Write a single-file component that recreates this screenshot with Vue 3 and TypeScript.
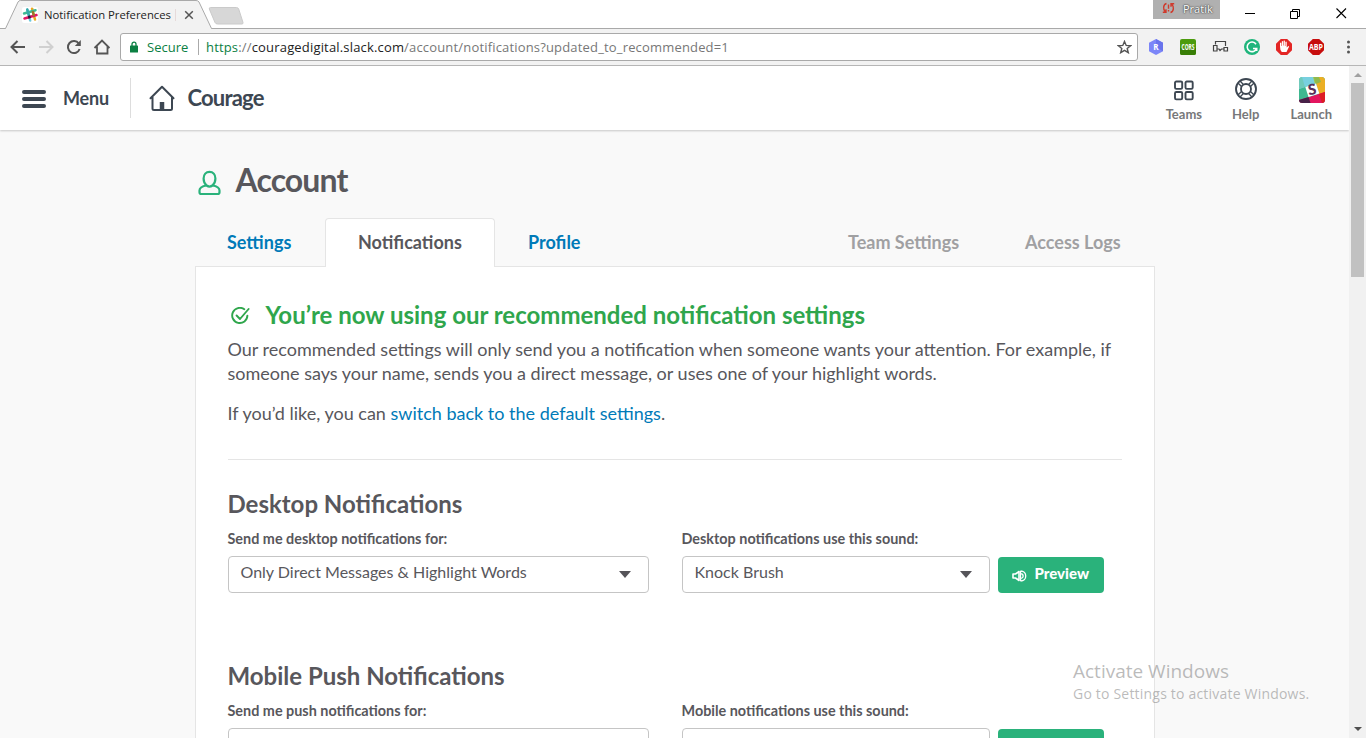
<script setup lang="ts">
interface Tab {
  label: string
  cls: string
}

interface Section {
  title: string
  scopeLabel: string
  scopeValue: string
  soundLabel: string
  soundValue: string
  action: string
}

const tabs: Tab[] = [
  { label: 'Settings', cls: 'tab-settings' },
  { label: 'Notifications', cls: 'tab-active' },
  { label: 'Profile', cls: 'tab-profile' },
  { label: 'Team Settings', cls: 'tab-muted tab-team' },
  { label: 'Access Logs', cls: 'tab-muted tab-logs' },
]

const sections: Section[] = [
  {
    title: 'Desktop Notifications',
    scopeLabel: 'Send me desktop notifications for:',
    scopeValue: 'Only Direct Messages & Highlight Words',
    soundLabel: 'Desktop notifications use this sound:',
    soundValue: 'Knock Brush',
    action: 'Preview',
  },
  {
    title: 'Mobile Push Notifications',
    scopeLabel: 'Send me push notifications for:',
    scopeValue: '',
    soundLabel: 'Mobile notifications use this sound:',
    soundValue: '',
    action: '',
  },
]
</script>

<template>
  <div class="window">
    <div class="titlebar">
      <svg class="tab-shapes" width="260" height="29" viewBox="0 0 260 29">
        <path d="M0 28.5H5.5L18 2Q18.800 .5 20.500 .5H196Q198 .5 199 2L211.500 28.500H260V29H0Z" fill="#f2f2f2" />
        <path d="M0 28.500H5.500L18 2Q18.800 .5 20.500 .5H196Q198 .5 199 2L211.500 28.500H260" fill="none" stroke="#a9a9a9" />
        <path d="M210.500 7.500H236.500Q238 7.500 238.700 9L243 22.500Q243.300 24 242 24H217.500Q215.800 24 215 22.500L209.300 9Q209 7.500 210.500 7.500Z" fill="#d7d7d7" stroke="#cacaca" />
      </svg>
      <div class="tab-content">
        <svg class="favicon" width="16" height="16" viewBox="0 0 16 16">
          <rect width="16" height="16" rx="2" fill="#fff" />
          <g fill="none" stroke-width="2.500" stroke-linecap="round">
            <path d="M5.200 2.500L8.200 13.500" stroke="#6ecadc" />
            <path d="M10 1.700L13 12.500" stroke="#e9a820" />
            <path d="M2 6.500L13.500 3.200" stroke="#3eb991" />
            <path d="M2.500 11.500L14.500 8" stroke="#e01563" />
            <path d="M5.300 2.600L6 5.300M6.200 6L7 8.700" stroke="#36a9a9" />
            <path d="M10.900 5L11.700 8" stroke="#99762b" />
          </g>
          <path d="M5.800 9L8.200 8.300L8.900 11L6.500 11.700Z" fill="#361238" />
        </svg>
        <span class="tab-title">Notification Preferences</span>
        <span class="tab-rule"></span>
        <svg class="tab-close" width="10" height="10" viewBox="0 0 10 10"><path d="M1.200 1.200L8.800 8.800M8.800 1.200L1.200 8.800" stroke="#555" stroke-width="1.500" /></svg>
      </div>
      <div class="win-controls">
        <div class="profile">
          <svg width="13" height="13" viewBox="0 0 13 13" fill="none" stroke="#cf3a2c" stroke-width="1.400">
            <path d="M4.500 1.500C1 2.500 .8 7.500 3.300 9.700M.8 10.300H4V7.300" />
            <path d="M8.500 10.500C12 9.500 12.200 4.500 9.700 2.300M12.200 1.700H9V4.700" />
            <path d="M6.500 2.500V6.700M6.500 8V9.500" />
          </svg>
          <span>Pratik</span>
        </div>
        <svg class="wc" width="106" height="14" viewBox="0 0 106 14" fill="none" stroke="#000">
          <path d="M0 7.500H10" />
          <path d="M45.500 5.500H52.500V12.500H45.500ZM47.500 5V3.500H54.500V10.500H53" />
          <path d="M91.500 2.500L101 12M101 2.500L91.500 12" stroke-width="1.100" />
        </svg>
      </div>
    </div>

    <div class="toolbar">
      <svg class="nav-icons" width="104" height="18" viewBox="0 0 104 18" fill="none" stroke="#555" stroke-width="2">
        <path d="M19 9H6.300M11.500 3L5.500 9L11.500 15" />
        <path d="M33 9H46M40.500 3L46.500 9L40.500 15" stroke="#d0d0d0" />
        <path d="M72.800 5.600A6 6 0 1 0 73.600 11" />
        <path d="M74.800 2V8H68.800Z" fill="#555" stroke="none" />
        <path d="M88.500 10L96 2.500L103.500 10M91 8.500V15.500H101.500V8.500" stroke-width="1.800" />
      </svg>
      <div class="omnibox">
        <svg width="8" height="12" viewBox="0 0 8 12"><path d="M2 5V3.200a2 2 0 0 1 4 0V5" fill="none" stroke="#0b8043" stroke-width="1.300" /><rect y="4.500" width="8" height="7" rx=".6" fill="#0b8043" /></svg>
        <span class="secure">Secure</span>
        <span class="sep"></span>
        <span class="url"><b>https</b><i>://</i>couragedigital.slack.com<i>/account/notifications?updated_to_recommended=1</i></span>
        <svg class="star" width="15" height="14" viewBox="0 0 15 14"><path d="M7.500 1.400L9.200 5.400L13.600 5.700L10.200 8.500L11.300 12.700L7.500 10.400L3.700 12.700L4.800 8.500L1.400 5.700L5.800 5.400Z" fill="none" stroke="#555" stroke-width="1.400" /></svg>
      </div>
      <svg class="extensions" width="208" height="18" viewBox="0 0 208 18">
        <path d="M8 1L15 4.800V13.200L8 17L1 13.200V4.800Z" fill="#7c86f8" />
        <path d="M8 1L15 4.800V13.200L8 9Z" fill="#6974ec" />
        <text x="8" y="12" class="ext-r">R</text>
        <rect x="32" y="1" width="16" height="16" rx="2" fill="#4c9b0e" />
        <path d="M32 10H48V15Q48 17 46 17H34Q32 17 32 15Z" fill="#387e06" />
        <text x="40" y="12" class="ext-cors" textLength="13" lengthAdjust="spacingAndGlyphs">CORS</text>
        <g fill="none" stroke="#444" stroke-width="1.200">
          <path d="M67.500 6.500V3.500H77.500V8M65.500 7.500H69V13H65.500ZM76 9.500H79.500V13H76ZM69 11H71L72 12.500L73.500 11H76" />
        </g>
        <circle cx="104" cy="9" r="8" fill="#1fb57c" />
        <path d="M108 6.200A4.800 4.800 0 1 0 108.500 10.500H105M108.700 10V13" fill="none" stroke="#fff" stroke-width="1.600" />
        <path d="M132.800 1H139.200L144 5.800V12.200L139.200 17H132.800L128 12.200V5.800Z" fill="#e32625" />
        <path d="M132 8.500V5Q132.700 4 133.300 5V8H133.800V3.500Q134.500 2.500 135.100 3.500V7.500H135.600V2.800Q136.300 2 136.900 2.800V8H137.400V4Q138.100 3.200 138.700 4V9.500L140.300 8Q141.600 8.300 140.800 9.300L138.500 14H133.800Q132 12.500 132 8.500Z" fill="#fff" />
        <path d="M164.800 1H171.200L176 5.800V12.200L171.200 17H164.800L160 12.200V5.800Z" fill="#c70d0d" />
        <text x="168" y="12" class="ext-abp" textLength="14" lengthAdjust="spacingAndGlyphs">ABP</text>
        <g fill="#555"><circle cx="200.500" cy="4" r="1.500" /><circle cx="200.500" cy="9" r="1.500" /><circle cx="200.500" cy="14" r="1.500" /></g>
      </svg>
    </div>

    <div class="viewport">
      <div class="page">
        <header class="site-header">
          <svg class="burger" width="24" height="18" viewBox="0 0 24 18" stroke="#3d4752" stroke-width="4" stroke-linecap="round"><path d="M2 2H22M2 9H22M2 16H22" /></svg>
          <span class="menu-label">Menu</span>
          <span class="divider"></span>
          <svg class="house" width="26" height="26" viewBox="0 0 26 26" fill="none" stroke="#3d4752" stroke-width="2" stroke-linecap="round" stroke-linejoin="round">
            <path d="M1.500 13.300L13 1.800L24.500 13.300M3.500 12V23.500Q3.500 25 5 25H21.500Q23 25 23 23.500V12" />
            <path d="M13 24V17" stroke-width="4.500" stroke-linecap="butt" />
          </svg>
          <span class="team-name">Courage</span>
          <nav class="quick">
            <div class="q-item q-teams">
              <svg width="22" height="26" viewBox="0 0 22 26" fill="none" stroke="#3d4752" stroke-width="1.900"><rect x="2" y="4.500" width="7.200" height="7.400" rx="1.300" /><rect x="12.500" y="4.500" width="7.200" height="7.400" rx="1.300" /><rect x="2" y="15" width="7.200" height="7.400" rx="1.300" /><rect x="12.500" y="15" width="7.200" height="7.400" rx="1.300" /></svg>
              <span>Teams</span>
            </div>
            <div class="q-item q-help">
              <svg width="24" height="26" viewBox="0 0 24 26" fill="none" stroke="#3d4752" stroke-width="1.900"><circle cx="12" cy="12" r="10" /><circle cx="12" cy="12" r="5" /><path d="M4 6L7.200 9.200M6 4L9.200 7.200M14.800 7.200L18 4M16.800 9.200L20 6M7.200 14.800L4 18M9.200 16.800L6 20M14.800 16.800L18 20M16.800 14.800L20 18" stroke-width="1.300" /></svg>
              <span>Help</span>
            </div>
            <div class="q-item q-launch">
              <svg width="26" height="26" viewBox="0 0 26 26">
                <defs><clipPath id="tile"><rect width="26" height="26" rx="3.500" /></clipPath></defs>
                <g clip-path="url(#tile)">
                  <rect width="26" height="26" fill="#3eb890" />
                  <path d="M0 0H15L17 6L6 10L0 12Z" fill="#78d0df" />
                  <path d="M0 0H3L6 10L0 12Z" fill="#70cabb" />
                  <path d="M14 0H20L21.500 5L16 7Z" fill="#a4c64b" />
                  <path d="M20 0H26V17L20 17L17 6Z" fill="#ebaf24" />
                  <path d="M15 0H20L22 5L16.500 7Z" fill="#90b94c" />
                  <path d="M10 20L26 15V26H0V23Z" fill="#e3155f" />
                  <path d="M20 17L26 15V26H23Z" fill="#dd1d23" />
                  <path d="M0 23L9.500 20L11.500 26H0Z" fill="#472148" />
                  <path d="M6.300 10L17 6.500L20.300 16.500L9.500 20Z" fill="#fff" />
                </g>
                <text x="13.300" y="17.800" class="launch-s" transform="rotate(-8 13 13)">S</text>
              </svg>
              <span>Launch</span>
            </div>
          </nav>
        </header>

        <main class="content">
          <h1>
            <svg width="24" height="26" viewBox="0 0 24 26" fill="none" stroke="#2ab27b" stroke-width="2.200" stroke-linejoin="round">
              <path d="M8.600 15.500C6.500 13.700 5.600 11 5.600 8.400C5.600 4.500 8 1.800 11.500 1.800S17.400 4.500 17.400 8.400C17.400 11 16.500 13.700 14.400 15.500C17.500 16 21.500 17.500 21.500 20.500V22.300Q21.500 24 19.800 24H3.200Q1.500 24 1.500 22.300V20.500C1.500 17.500 5.500 16 8.600 15.500Q11.500 17.600 14.400 15.500" />
            </svg>
            <span>Account</span>
          </h1>
          <div class="tabs">
            <a v-for="t in tabs" :key="t.label" class="tab" :class="t.cls"><span>{{ t.label }}</span></a>
          </div>
          <div class="card">
            <h2 class="success">
              <svg width="19" height="18" viewBox="0 0 19 18" fill="none" stroke="#2fa64c" stroke-width="1.900" stroke-linecap="round" stroke-linejoin="round"><path d="M13.300 2.300A7.600 7.600 0 1 0 16.400 8.600M5.600 8.500L9 12L17.600 2" /></svg>
              <span>You’re now using our recommended notification settings</span>
            </h2>
            <p class="body-text">Our recommended settings will only send you a notification when someone wants your attention. For example, if<br />someone says your name, sends you a direct message, or uses one of your highlight words.</p>
            <p class="body-text second">If you’d like, you can <a>switch back to the default settings</a>.</p>
            <hr />
            <section v-for="s in sections" :key="s.title" class="section">
              <h3>{{ s.title }}</h3>
              <div class="fields">
                <div class="field scope">
                  <label>{{ s.scopeLabel }}</label>
                  <div class="select"><span>{{ s.scopeValue }}</span><i class="caret"></i></div>
                </div>
                <div class="field sound">
                  <label>{{ s.soundLabel }}</label>
                  <div class="select"><span>{{ s.soundValue }}</span><i class="caret"></i></div>
                </div>
                <button class="preview">
                  <svg width="15" height="12" viewBox="0 0 15 12" fill="none" stroke="#fff" stroke-width="1.600" stroke-linejoin="round"><path d="M1 4H3.500L7 1.500V10.500L3.500 8H1Z" /><path d="M8.500 1C15.500 1 15.500 11 8.500 11M8.500 3.600C12 3.600 12 8.400 8.500 8.400M8.500 1V11" stroke-width="1.300" /></svg>
                  <span>{{ s.action }}</span>
                </button>
              </div>
            </section>
          </div>
        </main>
      </div>
      <div class="scrollbar">
        <i class="up"></i>
        <div class="thumb"></div>
        <i class="down"></i>
      </div>
    </div>

    <div class="watermark">
      <div class="wm-title">Activate Windows</div>
      <div class="wm-sub">Go to Settings to activate Windows.</div>
    </div>
  </div>
</template>

<style>
html, body { margin: 0; overflow: hidden; }
</style>

<style scoped>
* { box-sizing: border-box; }
.window { position: relative; width: 1366px; height: 738px; overflow: hidden; display: flex; flex-direction: column; background: #fff; font-family: Lato, sans-serif; color: #58575c; white-space: nowrap; }
i { font-style: normal; }
.titlebar { position: relative; height: 29px; flex: none; display: flex; justify-content: space-between; border-bottom: 1px solid #a9a9a9; font-family: "Open Sans", sans-serif; }
.tab-shapes { position: absolute; left: 0; top: 0; }
.tab-content { position: relative; display: flex; align-items: center; height: 29px; padding-left: 22px; }
.tab-title { width: 131px; margin-left: 6px; font-size: 11.300px; line-height: 20px; color: #222; }
.tab-rule { width: 1px; height: 12px; background: #e6dada; }
.tab-close { margin-left: 8px; }
.win-controls { display: flex; }
.profile { width: 67px; height: 19px; background: #b0b0b0; display: flex; align-items: center; padding-left: 9px; gap: 8px; font-size: 11px; color: #fff; text-shadow: 0 0 2px #333, 0 0 1px #333; }
.profile svg { margin-top: -2px; }
.profile span { line-height: 16px; margin-top: -1px; }
.wc { margin: 6px 15px 0 25px; }
.toolbar { height: 37px; flex: none; display: flex; align-items: center; background: #f2f2f2; border-bottom: 1px solid #b6b6b6; }
.nav-icons { margin-left: 6px; }
.omnibox { width: 1018px; height: 28px; margin-left: 10px; background: #fff; border: 1px solid #a9a9a9; border-radius: 3px; display: flex; align-items: center; padding-left: 9px; font-family: "Open Sans", sans-serif; font-size: 13px; }
.secure { margin-left: 9px; color: #0b8043; width: 42px; }
.sep { width: 1px; height: 16px; background: #aaa; margin: 0 7px 0 9px; }
.url { color: #222; letter-spacing: .17px; }
.url b { font-weight: 400; color: #0b8043; }
.url i { color: #777; }
.star { margin: 0 5px 0 auto; }
.extensions { margin-left: 10px; }
.ext-r { font: 700 8px "Open Sans"; fill: #fff; text-anchor: middle; }
.ext-cors { font: 700 8px "Open Sans"; fill: #fff; text-anchor: middle; }
.ext-abp { font: 700 8.500px "Open Sans"; fill: #fff; text-anchor: middle; }
.viewport { flex: 1; display: flex; min-height: 0; }
.page { flex: 1; background: #f9f9f9; overflow: hidden; }
.site-header { height: 64px; background: #fff; box-shadow: 0 1px 2px rgba(0,0,0,.2); display: flex; align-items: center; padding-left: 22px; color: #3d4752; font-weight: 700; }
.burger { margin-top: 2px; }
.menu-label { margin: 0 0 0 17px; width: 51px; font-size: 18px; letter-spacing: -.2px; }
.divider { width: 1px; height: 40px; margin-left: 16px; background: #ddd; }
.house { margin: -1px 0 0 18px; }
.team-name { margin: -1px 0 0 12.500px; font-size: 22px; letter-spacing: -.8px; }
.quick { margin: 3px 0 0 auto; display: flex; font-size: 13px; color: #77787a; padding-right: 17px; }
.q-item { display: flex; flex-direction: column; align-items: center; }
.q-item svg { display: block; margin-bottom: 3px; }
.q-item span { line-height: 16px; }
.q-help { margin-left: 30px; }
.q-launch { margin-left: 31px; }
.q-launch svg { margin-left: 2px; }
.launch-s { font: 900 15px Lato; fill: #57305a; text-anchor: middle; }
.content { width: 960px; margin-left: 195px; }
h1 { height: 88px; margin: 0; padding: 29px 0 0 3px; display: flex; font-size: 32px; line-height: 42px; font-weight: 700; letter-spacing: -.9px; }
h1 svg { margin: 11px 13.500px 0 0; }
.tabs { height: 48px; display: flex; font-size: 18px; font-weight: 700; line-height: 48px; }
.tab { display: block; color: #007ab8; }
.tab-settings { width: 130px; padding-left: 32px; }
.tab-active { height: 49px; position: relative; width: 170px; padding-left: 32px; background: #fff; border: 1px solid #e5e5e5; border-bottom: 0; border-radius: 4px 4px 0 0; color: #58575c; line-height: 46px; }
.tab-profile { padding-left: 33px; width: 353px; }
.tab-muted { color: #a0a0a2; }
.tab-team { width: 177px; }
.card { height: 600px; background: #fff; border: 1px solid #e5e5e5; padding: 33px 32px 0 31.500px; }
.success { display: flex; height: 34px; margin: 0; color: #2fa64c; font-size: 24px; line-height: 30px; font-weight: 700; }
.success svg { margin: 7px 16px 0 3px; }
.body-text { margin: 3px 0 0; font-size: 18px; line-height: 24px; }
.second { margin-top: 16px; }
.body-text a { color: #007ab8; }
hr { margin: 34px 0 28px; border: 0; border-top: 1px solid #e5e5e5; }
.section { height: 172px; }
h3 { margin: 0; font-size: 24px; line-height: 32px; font-weight: 700; }
.fields { display: flex; padding-top: 10px; }
.scope { width: 421px; }
.sound { width: 308px; margin-left: 33px; }
label { display: block; font-size: 14.400px; line-height: 18px; font-weight: 700; height: 26px; }
.select { height: 37px; border: 1px solid #c5c5c5; border-radius: 4px; display: flex; justify-content: space-between; padding: 0 17px 0 12px; font-size: 16px; line-height: 30px; }
.caret { margin-top: 14px; border: 6px solid transparent; border-top: 7px solid #555459; border-bottom: 0; height: 0; }
.preview { width: 106px; height: 36px; margin: 27px 0 0 8px; border: 0; border-radius: 4px; padding: 0 0 4px 14px; background: #2ab27b; color: #fff; display: flex; align-items: center; gap: 8px; font: 900 15px Lato, sans-serif; }
.preview svg { margin-top: 6px; }
.scrollbar { width: 17px; background: #f1f1f1; display: flex; flex-direction: column; align-items: center; }
.up { margin-top: 7px; border: 4px solid transparent; border-top: 0; border-bottom: 4px solid #a0a0a0; }
.thumb { width: 13px; height: 194px; margin-top: 6px; background: #c1c1c1; }
.down { margin: auto 0 7px; border: 4px solid transparent; border-bottom: 0; border-top: 4px solid #505050; }
.watermark { position: absolute; left: 1073px; top: 658px; font-family: "Open Sans", sans-serif; color: rgba(120,120,120,.5); }
.wm-title { font-size: 19px; line-height: 26px; }
.wm-sub { font-size: 14px; line-height: 19px; letter-spacing: .2px; }
</style>
